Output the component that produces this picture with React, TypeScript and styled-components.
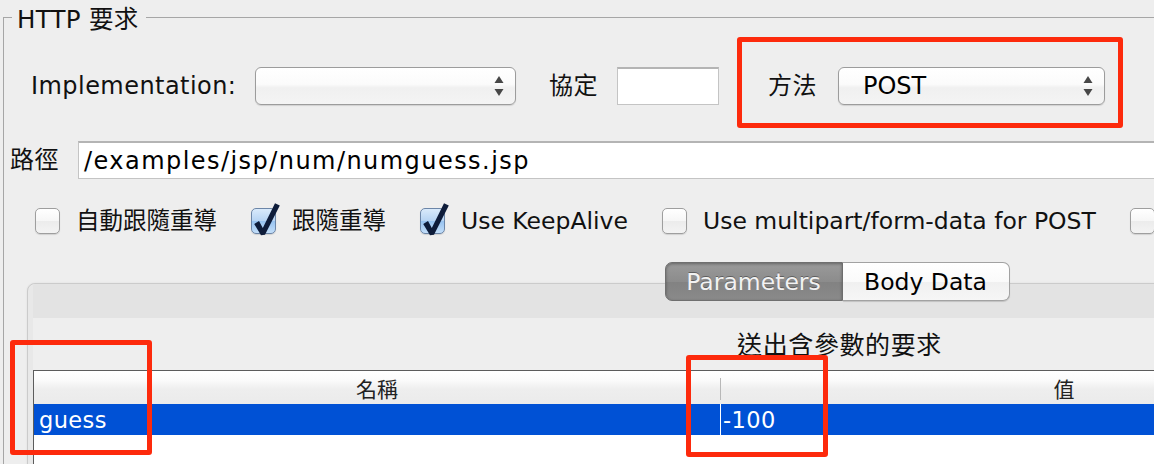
import React from "react";
import styled, { createGlobalStyle } from "styled-components";

const Global = createGlobalStyle`
  html, body { margin: 0; padding: 0; background: #eeeeee; }
  body {
    width: 1154px; height: 464px; overflow: hidden;
    font-family: "DejaVu Sans", "Noto Sans CJK TC", sans-serif;
    color: #111;
  }
`;

const Page = styled.div`
  position: relative;
  width: 1154px;
  height: 464px;
  overflow: hidden;
  background: #eeeeee;
`;

const Group = styled.fieldset`
  margin: 0 0 0 3px;
  padding: 0;
  width: 1700px;
  height: 700px;
  box-sizing: border-box;
  min-inline-size: 0;
  border: 0;
  border-top: 1px solid #a6a6a6;
  border-left: 1px solid #a6a6a6;
`;

const Legend = styled.legend`
  margin-left: 8px;
  padding: 6px 7px 0 5px;
  font-size: 24.5px;
  line-height: 28px;
  letter-spacing: 0.3px;
  color: #111;
`;

const Row = styled.div<{ $top: number; $left: number; $h: number }>`
  display: flex;
  align-items: center;
  margin-top: ${(p) => p.$top}px;
  padding-left: ${(p) => p.$left}px;
  height: ${(p) => p.$h}px;
`;

const FieldLabel = styled.span<{ $w: number; $ml?: number }>`
  flex: none;
  width: ${(p) => p.$w}px;
  margin-left: ${(p) => p.$ml ?? 0}px;
  font-size: 24px;
  line-height: 30px;
  letter-spacing: 0.45px;
  white-space: nowrap;
`;

const Select = styled.div<{ $w: number }>`
  flex: none;
  box-sizing: border-box;
  width: ${(p) => p.$w}px;
  height: 38px;
  display: flex;
  align-items: center;
  justify-content: space-between;
  padding: 0 11px 0 24px;
  border: 1px solid #9c9c9c;
  border-radius: 6px;
  background: linear-gradient(#ffffff 0%, #fbfbfb 45%, #f0f0f0 55%, #f4f4f4 100%);
  box-shadow: 0 1px 1px rgba(0, 0, 0, 0.12);
  font-size: 24px;
  line-height: 30px;
  color: #000;
`;

const TextBox = styled.div<{ $w: number }>`
  flex: none;
  box-sizing: border-box;
  width: ${(p) => p.$w}px;
  height: 38px;
  display: flex;
  align-items: center;
  padding-left: 5px;
  background: #fff;
  border: 1px solid #c4c4c4;
  border-top: 2px solid #b4b4b4;
  font-size: 24px;
  letter-spacing: 1.45px;
  white-space: nowrap;
  color: #000;
`;

const CheckRow = styled.div`
  display: flex;
  align-items: center;
  gap: 34px;
  margin-top: 29px;
  padding-left: 31px;
  height: 26px;
`;

const CheckItem = styled.label`
  display: flex;
  align-items: center;
  gap: 16px;
  font-size: 23.5px;
  line-height: 30px;
  white-space: nowrap;
  color: #111;
`;

const Box = styled.span<{ $on: boolean }>`
  position: relative;
  flex: none;
  box-sizing: border-box;
  width: 25px;
  height: 26px;
  border-radius: 5px;
  border: 1px solid ${(p) => (p.$on ? "#6c86a8" : "#9e9e9e")};
  background: ${(p) =>
    p.$on
      ? "linear-gradient(#d9eafb 0%, #b7d4f3 48%, #98c3f0 52%, #c3def9 100%)"
      : "linear-gradient(#ffffff 0%, #f6f6f6 50%, #ececec 52%, #f3f3f3 100%)"};
  box-shadow: 0 1px 1px rgba(0, 0, 0, 0.12);
`;

const Tick = styled.svg`
  position: absolute;
  left: -1px;
  top: -1px;
  overflow: visible;
`;

const TabSection = styled.div`
  margin-top: 28px;
  padding-left: 23px;
  width: 1620px;
`;

const TabBar = styled.div`
  position: relative;
  z-index: 1;
  display: flex;
  justify-content: center;
`;

const Tab = styled.div<{ $active: boolean; $w: number; $side: "l" | "r" }>`
  box-sizing: border-box;
  width: ${(p) => p.$w}px;
  height: 39px;
  display: flex;
  align-items: center;
  justify-content: center;
  font-size: 23.5px;
  border: 1px solid ${(p) => (p.$active ? "#6f6f6f" : "#a2a2a2")};
  border-radius: ${(p) => (p.$side === "l" ? "7px 0 0 7px" : "0 7px 7px 0")};
  ${(p) => (p.$side === "r" ? "border-left: none;" : "")}
  background: ${(p) =>
    p.$active
      ? "linear-gradient(#9a9a9a 0%, #8c8c8c 50%, #828282 52%, #8a8a8a 100%)"
      : "linear-gradient(#ffffff 0%, #fafafa 50%, #f0f0f0 52%, #f6f6f6 100%)"};
  box-shadow: ${(p) =>
    p.$active ? "inset 0 1px 3px rgba(0,0,0,0.35)" : "0 1px 1px rgba(0,0,0,0.15)"};
  color: ${(p) => (p.$active ? "#f2f2f2" : "#000")};
  text-shadow: ${(p) => (p.$active ? "0 -1px 0 rgba(0,0,0,0.35)" : "none")};
`;

const Panel = styled.div`
  margin-top: -18px;
  border: 1px solid #cbcbcb;
  border-radius: 8px 8px 0 0;
  background: #e8e8e8;
  padding-left: 5px;
  box-shadow: 0 0 2px rgba(0, 0, 0, 0.08);
`;

const Band = styled.div`
  height: 34px;
  background: #e3e3e3;
`;

const PanelBody = styled.div`
  background: #eeeeee;
  height: 200px;
`;

const Caption = styled.div`
  padding: 14px 0 10px;
  text-align: center;
  font-size: 25px;
  line-height: 28px;
  letter-spacing: 0.6px;
  color: #111;
`;

const Table = styled.div`
  width: 1374px;
  border-top: 1px solid #5c5c5c;
  border-left: 1px solid #5c5c5c;
  background: #fff;
  height: 120px;
`;

const Header = styled.div`
  display: flex;
  height: 33px;
  background: linear-gradient(#ffffff 0%, #fafafa 30%, #eeeeee 55%, #ebebeb 100%);
`;

const HeadCell = styled.div<{ $w: number }>`
  position: relative;
  width: ${(p) => p.$w}px;
  display: flex;
  align-items: center;
  justify-content: center;
  font-size: 21px;
  color: #222;
`;

const HeadDivider = styled.span`
  position: absolute;
  left: 0;
  top: 7px;
  width: 1px;
  height: 22px;
  background: #b8b8b8;
`;

const DataRow = styled.div<{ $selected: boolean }>`
  display: flex;
  height: 31px;
  background: ${(p) => (p.$selected ? "#0051d5" : "#fff")};
  color: ${(p) => (p.$selected ? "#fff" : "#000")};
`;

const Cell = styled.div<{ $w: number; $divider?: boolean }>`
  box-sizing: border-box;
  width: ${(p) => p.$w}px;
  display: flex;
  align-items: center;
  padding-left: ${(p) => (p.$divider ? 2 : 5)}px;
  border-left: ${(p) => (p.$divider ? "1px solid #fff" : "none")};
  font-size: 22.5px;
  letter-spacing: 0.4px;
`;

const Mark = styled.div<{ $x: number; $y: number; $w: number; $h: number }>`
  position: absolute;
  left: ${(p) => p.$x}px;
  top: ${(p) => p.$y}px;
  width: ${(p) => p.$w}px;
  height: ${(p) => p.$h}px;
  box-sizing: border-box;
  border: 5px solid #fd2a0c;
  border-radius: 3px;
  pointer-events: none;
`;

const Arrows = () => (
  <svg width="10" height="20" viewBox="0 0 10 20">
    <path d="M5 0 L9.5 7 L0.5 7 Z" fill="#474747" />
    <path d="M0.5 13 L9.5 13 L5 20 Z" fill="#474747" />
  </svg>
);

const Check = ({ on, children }: { on: boolean; children?: React.ReactNode }) => (
  <CheckItem>
    <Box $on={on}>
      {on && (
        <Tick width="25" height="26" viewBox="0 0 25 26">
          <path
            d="M3.2 16 L8 13 L11.8 20 L24 -4.8 L28.8 -2.6 L14 26.8 L10 27.2 Z"
            fill="#0e1c3a"
          />
        </Tick>
      )}
    </Box>
    {children && <span>{children}</span>}
  </CheckItem>
);

export default function App() {
  return (
    <Page>
      <Global />
      <Group>
        <Legend>HTTP 要求</Legend>
        <Row $top={33} $left={27} $h={38}>
          <FieldLabel $w={224}>Implementation:</FieldLabel>
          <Select $w={261}>
            <span />
            <Arrows />
          </Select>
          <FieldLabel $w={68} $ml={33}>協定</FieldLabel>
          <TextBox $w={102} />
          <FieldLabel $w={70} $ml={49}>方法</FieldLabel>
          <Select $w={267}>
            <span>POST</span>
            <Arrows />
          </Select>
        </Row>
        <Row $top={36} $left={6} $h={38}>
          <FieldLabel $w={68}>路徑</FieldLabel>
          <TextBox $w={1300}>/examples/jsp/num/numguess.jsp</TextBox>
        </Row>
        <CheckRow>
          <Check on={false}>自動跟隨重導</Check>
          <Check on>跟隨重導</Check>
          <Check on>Use KeepAlive</Check>
          <Check on={false}>Use multipart/form-data for POST</Check>
          <Check on={false} />
        </CheckRow>
        <TabSection>
          <TabBar>
            <Tab $active $w={178} $side="l">Parameters</Tab>
            <Tab $active={false} $w={167} $side="r">Body Data</Tab>
          </TabBar>
          <Panel>
            <Band />
            <PanelBody>
              <Caption>送出含參數的要求</Caption>
              <Table>
                <Header>
                  <HeadCell $w={686}>名稱</HeadCell>
                  <HeadCell $w={688}>
                    <HeadDivider />值
                  </HeadCell>
                </Header>
                <DataRow $selected>
                  <Cell $w={686}>guess</Cell>
                  <Cell $w={688} $divider>-100</Cell>
                </DataRow>
              </Table>
            </PanelBody>
          </Panel>
        </TabSection>
      </Group>
      <Mark $x={737} $y={37} $w={386} $h={91} />
      <Mark $x={10} $y={340} $w={142} $h={115} />
      <Mark $x={686} $y={355} $w={142} $h={102} />
    </Page>
  );
}
